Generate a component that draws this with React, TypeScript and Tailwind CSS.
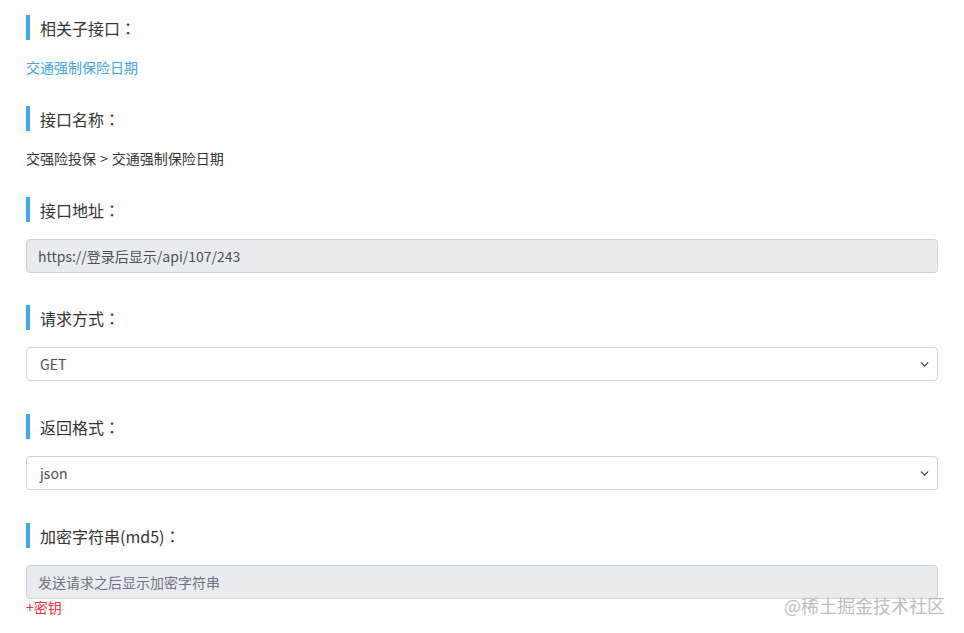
import { ChevronDown } from "lucide-react"

const font = { fontFamily: '"Noto Sans CJK SC", "Liberation Sans", sans-serif' }

function Heading({ children }: { children: React.ReactNode }) {
  return (
    <div className="flex h-[25px] items-center border-l-4 border-[#3daaf0] pl-[10px] text-[16px] text-[#333]">
      {children}
      <span className="font-['Noto_Sans_CJK_TC',sans-serif]">：</span>
    </div>
  )
}

function Field({ value, muted }: { value: string; muted?: boolean }) {
  return (
    <div
      className={`mt-[17px] flex h-[34px] items-center rounded-[4px] border border-[#ced4da] bg-[#e9ecef] px-[11px] text-[14px] ${
        muted ? "text-[#6c757d]" : "text-[#495057]"
      }`}
    >
      {value}
    </div>
  )
}

function Select({ value }: { value: string }) {
  return (
    <div className="mt-[17px] flex h-[34px] items-center justify-between rounded-[4px] border border-[#ced4da] bg-white pl-[13px] pr-[6px] text-[14px] text-[#495057]">
      <span>{value}</span>
      <ChevronDown className="h-[13px] w-[13px] text-[#444]" strokeWidth={2.5} />
    </div>
  )
}

export default function App() {
  return (
    <div className="relative min-h-[633px] bg-white px-[26px] pt-[15px]" style={font}>
      <section className="mb-[29px]">
        <Heading>相关子接口</Heading>
        <div className="mt-[17px] text-[14px] leading-[20px] text-[#3ea6e2]">交通强制保险日期</div>
      </section>

      <section className="mb-[29px]">
        <Heading>接口名称</Heading>
        <div className="mt-[17px] text-[14px] leading-[20px] text-[#333]">
          交强险投保<span className="px-[4px]">&gt;</span>交通强制保险日期
        </div>
      </section>

      <section className="mb-[32px]">
        <Heading>接口地址</Heading>
        <Field value="https://登录后显示/api/107/243" />
      </section>

      <section className="mb-[33px]">
        <Heading>请求方式</Heading>
        <Select value="GET" />
      </section>

      <section className="mb-[33px]">
        <Heading>返回格式</Heading>
        <Select value="json" />
      </section>

      <section>
        <Heading>加密字符串(md5)</Heading>
        <Field value="发送请求之后显示加密字符串" muted />
        <div className="text-[14px] leading-[16px] text-[#e8333a]">+密钥</div>
      </section>

      <div className="absolute bottom-[17px] right-[19px] text-[18px] leading-[22px] text-[#b4b4b4]/90">
        @稀土掘金技术社区
      </div>
    </div>
  )
}
